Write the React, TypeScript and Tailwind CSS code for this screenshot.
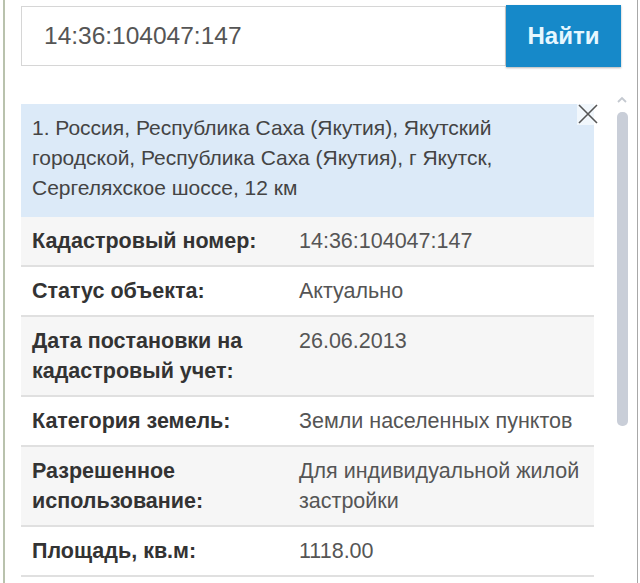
import React from 'react';

const rows: { label: string[]; value: string[]; shaded: boolean }[] = [
  { label: ['Кадастровый номер:'], value: ['14:36:104047:147'], shaded: true },
  { label: ['Статус объекта:'], value: ['Актуально'], shaded: false },
  { label: ['Дата постановки на', 'кадастровый учет:'], value: ['26.06.2013'], shaded: true },
  { label: ['Категория земель:'], value: ['Земли населенных пунктов'], shaded: false },
  { label: ['Разрешенное', 'использование:'], value: ['Для индивидуальной жилой', 'застройки'], shaded: true },
  { label: ['Площадь, кв.м:'], value: ['1118.00'], shaded: false },
];

function CloseIcon() {
  return (
    <svg width="22" height="22" viewBox="0 0 22 22" fill="none">
      <path d="M2 2 L20 20 M20 2 L2 20" stroke="#555" strokeWidth="1.6" />
    </svg>
  );
}

export default function App() {
  return (
    <div className="w-[640px] h-[583px] bg-white flex overflow-hidden font-[Liberation_Sans,Arial,sans-serif]">
      {/* window frame, left */}
      <div className="w-[3px] shrink-0" />
      <div className="w-[2px] shrink-0 bg-[#b9c2ad]" />

      <div className="flex-1 pl-[16px] pt-[5px] flex flex-col">
        {/* search bar */}
        <div className="flex items-stretch h-[62px] shrink-0">
          <div className="w-[485px] mt-px mb-px border border-[#d6d6d6] bg-white flex items-center pl-[22px] text-[24.5px] text-[#555]">
            14:36:104047:147
          </div>
          <button className="w-[115px] bg-[#1689c9] text-[#e6f7ff] text-[24px] font-bold flex items-center justify-center shadow-[0_1px_2px_rgba(0,0,0,0.3)] font-[Liberation_Sans,Arial,sans-serif]">
            Найти
          </button>
        </div>

        <div className="flex mt-[30px] shrink-0">
          {/* result card */}
          <div className="w-[573px] relative">
            <div className="bg-[#dceaf8] px-[11px] pt-[9px] pb-[14px] mt-[7px] text-[21px] leading-[30px] text-[#444]">
              <div>1. Россия, Республика Саха (Якутия), Якутский</div>
              <div>городской, Республика Саха (Якутия), г Якутск,</div>
              <div>Сергеляхское шоссе, 12 км</div>
            </div>
            <div className="absolute right-[-5px] top-[6px] bg-white/60">
              <CloseIcon />
            </div>

            {rows.map((r, i) => (
              <div
                key={i}
                className={`flex px-[11px] py-[9px] border-b-2 border-[#e0e0e0] text-[21.5px] leading-[30px] ${r.shaded ? 'bg-[#f6f6f6]' : 'bg-white'}`}
              >
                <div className="w-[267px] shrink-0 font-bold text-[#333]">
                  {r.label.map((l) => (
                    <div key={l}>{l}</div>
                  ))}
                </div>
                <div className="text-[#555]">
                  {r.value.map((v) => (
                    <div key={v}>{v}</div>
                  ))}
                </div>
              </div>
            ))}
          </div>

          {/* scrollbar */}
          <div className="ml-[22px] w-[12px] flex flex-col items-center">
            <svg width="12" height="8" viewBox="0 0 12 8" className="mt-[-1px]">
              <path d="M2 6 L6 2 L10 6" stroke="#c4c9d0" strokeWidth="1.8" fill="none" />
            </svg>
            <div className="mt-[8px] w-[11px] h-[314px] rounded-[5px] bg-[#c9ced8]" />
          </div>
        </div>
      </div>

      {/* window frame, right */}
      <div className="w-px shrink-0 bg-[#a8a8a8] mr-[2px]" />
    </div>
  );
}
